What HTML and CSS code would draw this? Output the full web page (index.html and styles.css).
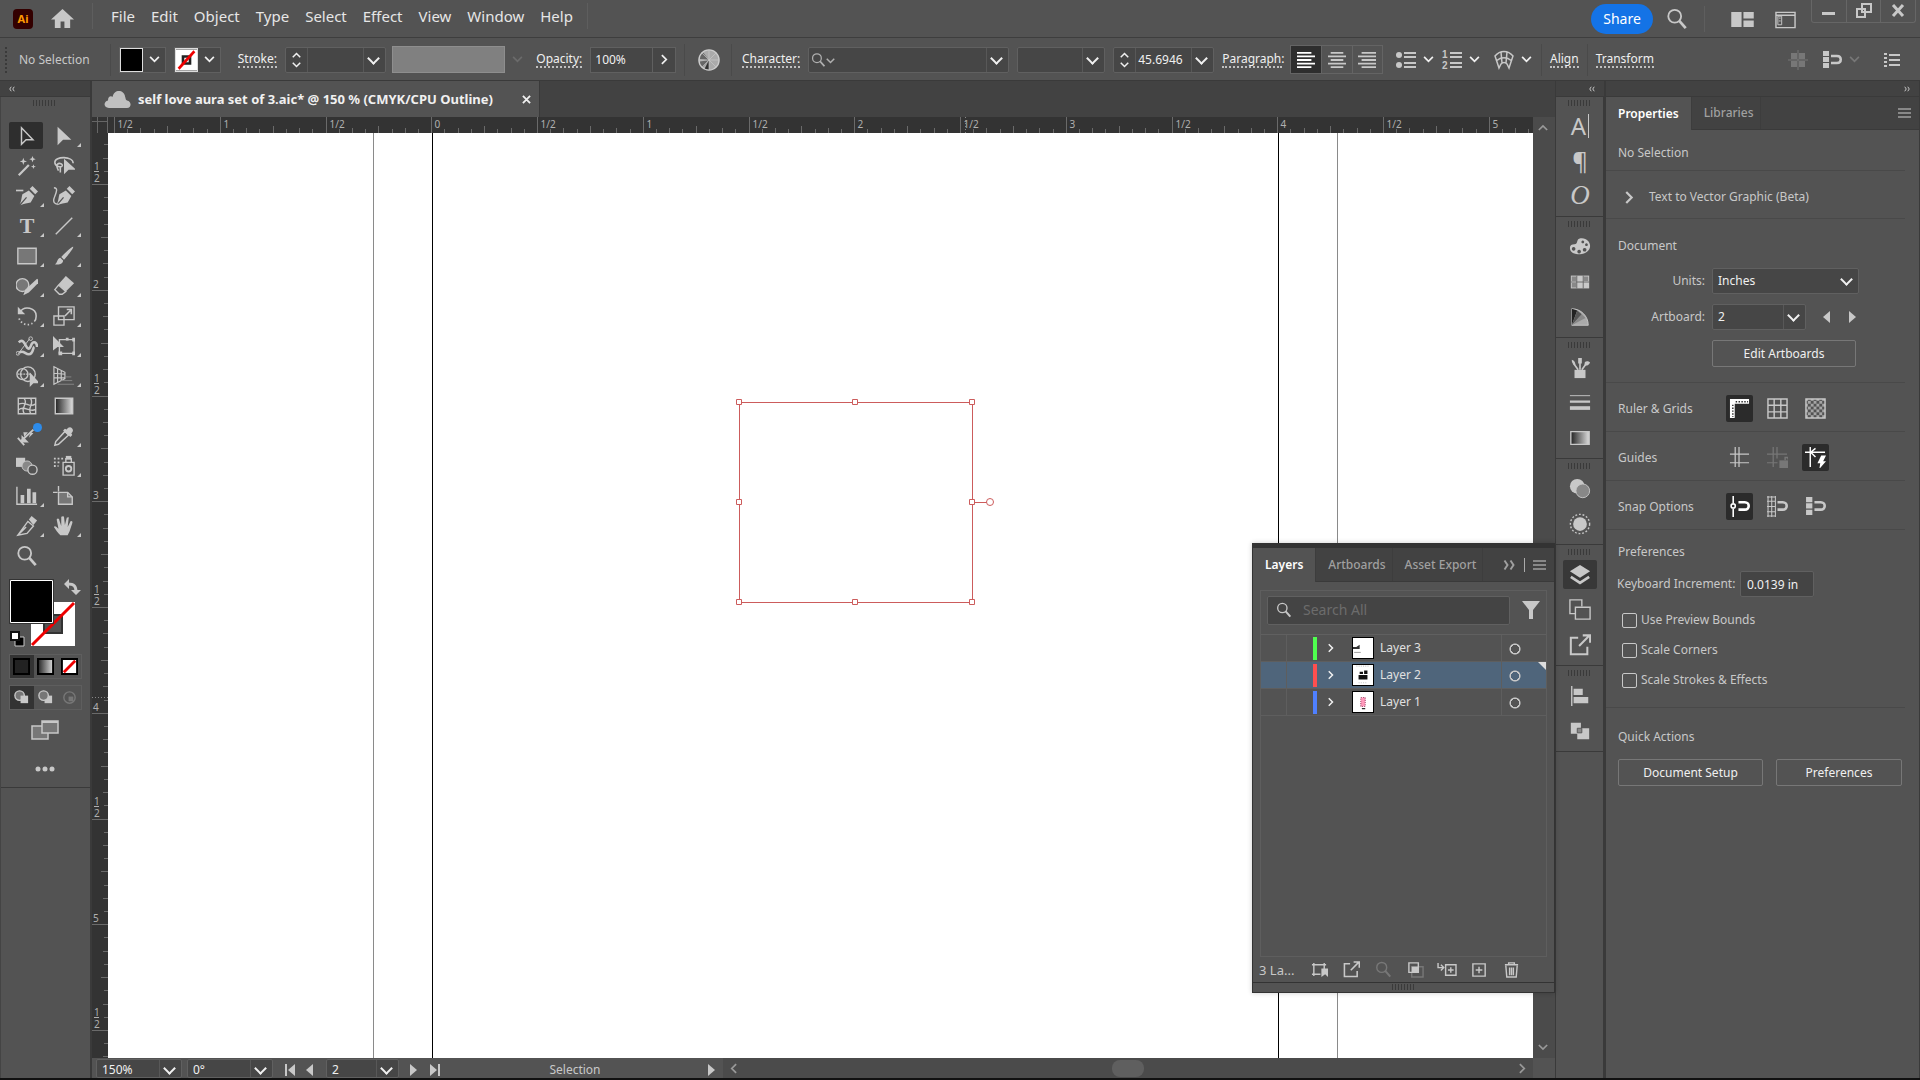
FILE: index.html
```html
<!DOCTYPE html>
<html lang="en">

<head>
    <meta charset="utf-8">
    <title>self love aura set of 3.aic</title>
    <link rel="stylesheet" href="styles.css">
</head>

<body>
    <!-- icon sprite -->
    <svg class="sprite" aria-hidden="true">
        <defs>
            <linearGradient id="grad"><stop offset="0" stop-color="#222" /><stop offset="1" stop-color="#ddd" /></linearGradient>
            <pattern id="checks" width="6" height="6" patternUnits="userSpaceOnUse"><path d="M0 0h3v3H0zM3 3h3v3H3z" fill="#c8c8c8" opacity=".7" /></pattern>
        </defs>
        <symbol id="select" viewBox="0 0 24 24"><path d="M6 3v18l5-5h7.500z" fill="none" stroke="currentColor" stroke-width="1.600" /></symbol>
        <symbol id="direct" viewBox="0 0 24 24"><path d="M5 2v20l6-6h9z" fill="currentColor" /></symbol>
        <symbol id="wand" viewBox="0 0 24 24"><path d="M3 22L14 11" stroke="currentColor" stroke-width="2.400" /><path d="M8 3l1 3 3 1-3 1-1 3-1-3-3-1 3-1zM18 1l1 2.500 2.500 1-2.500 1-1 2.500-1-2.500-2.500-1 2.500-1zM19 10l.7 2 2 .7-2 .7-.7 2-.7-2-2-.7 2-.7z" fill="currentColor" /></symbol>
        <symbol id="lasso" viewBox="0 0 24 24"><path d="M22 9c0-8-20-8-20-1 0 5 7 6 8 4s-3-4-5-2 0 5 1 7M8 12v7" fill="none" stroke="currentColor" stroke-width="1.700" /><path d="M12 4v17l5-5h8z" fill="currentColor" /></symbol>
        <symbol id="nib" viewBox="0 0 24 24"><path d="M4 21c2-3 2-8 3-11l7-4 6 6-4 7c-3 1-8 1-11 3l7-8-1-1zM15 4l3-3 6 6-3 3z" fill="currentColor" /></symbol>
        <symbol id="pen" viewBox="0 0 24 24"><use href="#nib" /><path d="M-1 6h9" stroke="currentColor" stroke-width="1.800" /></symbol>
        <symbol id="curve" viewBox="0 0 24 24"><use href="#nib" /><path d="M1 3c6 0 1 8 0 12s1 6 5 6" fill="none" stroke="currentColor" stroke-width="1.500" /></symbol>
        <symbol id="line" viewBox="0 0 24 24"><path d="M3 21L21 3" stroke="currentColor" stroke-width="1.600" /></symbol>
        <symbol id="rect" viewBox="0 0 24 24"><path d="M2 3.500h20v17H2z" fill="#777" stroke="currentColor" stroke-width="1.500" /></symbol>
        <symbol id="brush" viewBox="0 0 24 24"><path d="M22 2c1 1-6 10-10 14l-3-3C13 9 21 1 22 2zM8 14l3 3c0 4-5 5-9 4 3-1 2-6 6-7z" fill="currentColor" /></symbol>
        <symbol id="shaper" viewBox="0 0 24 24"><circle cx="7" cy="11" r="7" fill="#777" stroke="currentColor" stroke-width="1.500" /><path d="M8 22l2-6L23 4l3 3-12 12z" fill="currentColor" /></symbol>
        <symbol id="eraser" viewBox="0 0 24 24"><path d="M14 1l9 8-9 9-8-8z" fill="currentColor" /><path d="M6 11l-4 5 5 5h3l4-3z" fill="none" stroke="currentColor" stroke-width="1.500" /></symbol>
        <symbol id="rotate" viewBox="0 0 24 24"><path d="M4 8c5-8 18-5 18 4 0 3-1 5-2 6" fill="none" stroke="currentColor" stroke-width="1.700" /><path d="M2 2v8h8z" fill="currentColor" /><path d="M18 20a10 10 0 0 1-15-7" fill="none" stroke="currentColor" stroke-width="2" stroke-dasharray="1.500 2.500" /></symbol>
        <symbol id="scale" viewBox="0 0 24 24"><path d="M6 2h17v14H6zM1 12h11v10H1z" fill="none" stroke="currentColor" stroke-width="1.500" /><path d="M13 12l6-6M15 5h5v5" fill="none" stroke="currentColor" stroke-width="1.700" /></symbol>
        <symbol id="width" viewBox="0 0 24 24"><path d="M3 8c4-4 6 0 8 4 3 6 5 1 6-2 2-4 6-2 6 3M4 19c4-3 6 2 10 2 5 0 4-7 6-8" fill="none" stroke="currentColor" stroke-width="2.800" /><path d="M2 21L15 4" stroke="currentColor" /><circle cx="2" cy="20" r="2" fill="none" stroke="currentColor" /><circle cx="16" cy="4" r="2" fill="none" stroke="currentColor" /></symbol>
        <symbol id="free" viewBox="0 0 24 24"><path d="M7 5h16v15H7z" fill="none" stroke="currentColor" stroke-width="1.500" /><path d="M0 1v16l5-4h7zM21 3h4v4h-4zM21 18h4v4h-4zM6 18h4v4H6zM14 3h3v3h-3z" fill="currentColor" /></symbol>
        <symbol id="shape" viewBox="0 0 24 24"><circle cx="7" cy="10" r="6" fill="none" stroke="currentColor" stroke-width="1.500" /><circle cx="13" cy="10" r="8" fill="none" stroke="currentColor" stroke-width="1.500" /><path d="M2 10h14" stroke="currentColor" stroke-width="1.500" stroke-dasharray="2 1" /><path d="M15 8v16l4-4h7z" fill="currentColor" /></symbol>
        <symbol id="perspective" viewBox="0 0 24 24"><path d="M1 2v19l12-6V8zM5 4v15M9 6v11M1 9l12 1M1 14h12" fill="none" stroke="currentColor" stroke-width="1.300" /><path d="M14 13h6M9 17h12M5 21h18" stroke="#888" /></symbol>
        <symbol id="mesh" viewBox="0 0 24 24"><path d="M2.500 3.500h19v17h-19zM3 10c8-4 11 5 18 0M3 16c6-5 11 3 18 0M9 4c5 6-5 10 0 16M16 4c4 6-4 10 0 16" fill="none" stroke="currentColor" stroke-width="1.500" /></symbol>
        <symbol id="gradient" viewBox="0 0 24 24"><path d="M2.500 3.500h19v17h-19z" fill="url(#grad)" stroke="currentColor" stroke-width="1.500" /></symbol>
        <symbol id="dimension" viewBox="0 0 24 24"><path d="M2 14l7 8M5 18L19 5" fill="none" stroke="currentColor" stroke-width="2" /><path d="M6 11v8h8zM8 8h5l-4 5zM16 8l3 1-5 5z" fill="currentColor" /></symbol>
        <symbol id="dropper" viewBox="0 0 24 24"><path d="M13 7l4 4L6 21l-4 1 1-4z" fill="none" stroke="currentColor" stroke-width="1.600" /><path d="M11 6l2-2 2 1c3-6 10 0 5 4l1 2-2 2z" fill="currentColor" /></symbol>
        <symbol id="blend" viewBox="0 0 24 24"><path d="M0 3h10v10H0z" fill="currentColor" /><circle cx="12" cy="12" r="5.500" fill="#888" stroke="currentColor" /><circle cx="18" cy="16" r="5" fill="#535353" stroke="currentColor" stroke-width="1.500" /></symbol>
        <symbol id="spray" viewBox="0 0 24 24"><path d="M11 8h12v14H11zM14 4h6v4h-6z" fill="none" stroke="currentColor" stroke-width="1.500" /><path d="M14 1h6v4h-6z" fill="currentColor" /><circle cx="17" cy="15" r="3" fill="none" stroke="currentColor" stroke-width="2" /><path d="M1 4h10M1 8h7M1 12h5" stroke="currentColor" stroke-width="2" stroke-dasharray="2 2" /></symbol>
        <symbol id="graph" viewBox="0 0 24 24"><path d="M1 2v19h22" fill="none" stroke="currentColor" stroke-width="1.500" /><path d="M5 11h4v9H5zM12 4h4v16h-4zM18 8h4v12h-4z" fill="currentColor" /></symbol>
        <symbol id="artboard" viewBox="0 0 24 24"><path d="M6 8h10l5 5v8H6z" fill="#777" stroke="currentColor" stroke-width="1.500" /><path d="M6 1v6M-1 8h6M16 8v5h5" fill="none" stroke="currentColor" stroke-width="1.500" /></symbol>
        <symbol id="slice" viewBox="0 0 24 24"><path d="M2 22L13 7l6 5-7 8zM2 22l9-9" fill="none" stroke="currentColor" stroke-width="1.500" /><path d="M14 5l3-4 6 5-4 5z" fill="currentColor" /></symbol>
        <symbol id="hand" viewBox="0 0 24 24"><path d="M8 22c-3-3-5-6-7-9 1-2 3 0 5 2L4 5c1-2 3-1 3 1l2 6V2c1-1 3-1 3 0l1 9 2-8c1-1 3-1 2 1l-1 9 3-6c1-1 3 0 2 2l-3 9-2 4z" fill="currentColor" /></symbol>
        <symbol id="search" viewBox="0 0 24 24"><circle cx="9.500" cy="9" r="7" fill="none" stroke="currentColor" stroke-width="2" /><path d="M14.500 14l7 8" stroke="currentColor" stroke-width="3" /></symbol>
        <symbol id="home" viewBox="0 0 24 24"><path d="M12 2L0 13h4v9h6v-7h4v7h6v-9h4z" fill="currentColor" /></symbol>
        <symbol id="cloud" viewBox="0 0 28 20"><path d="M5 19c-6 0-6-7-1-8 0-5 3-5 5-4 1-8 12-8 13 0 1 2 0 3 2 4 5 1 5 8 0 8z" fill="currentColor" /></symbol>
        <symbol id="wheel" viewBox="0 0 24 24"><circle cx="12" cy="12" r="11" fill="#aaa" /><path d="M12 12L5 3a11 11 0 0 0-4 8zM12 12L1 14a11 11 0 0 0 4 6z" fill="#666" /><path d="M12 12l-5 10a11 11 0 0 0 5 1z" fill="#333" /><path d="M12 1v22M1 12h22M4 4l16 16M20 4L4 20" stroke="#ccc" stroke-width=".7" /><circle cx="12" cy="12" r="11" fill="none" stroke="#ccc" stroke-width="1.500" /></symbol>
        <symbol id="lines-left" viewBox="0 0 20 20"><path d="M0 2h16M0 6h20M0 10h16M0 14h20M0 18h16" stroke="currentColor" stroke-width="2" /></symbol>
        <symbol id="lines-mid" viewBox="0 0 20 20"><path d="M3 2h14M0 6h20M3 10h14M0 14h20M3 18h14" stroke="currentColor" stroke-width="2" /></symbol>
        <symbol id="lines-right" viewBox="0 0 20 20"><path d="M4 2h16M0 6h20M4 10h16M0 14h20M4 18h16" stroke="currentColor" stroke-width="2" /></symbol>
        <symbol id="bullets" viewBox="0 0 20 20"><circle cx="3" cy="5" r="3" fill="currentColor" /><circle cx="3" cy="15" r="3" fill="currentColor" /><path d="M8 3h12M8 7h12M8 13h12M8 17h12" stroke="currentColor" stroke-width="2" /></symbol>
        <symbol id="envelope" viewBox="0 0 20 20"><path d="M1 6c5-6 13-6 18 0l-4 12-2-4c-2-2-4-2-6 0l-2 4zM7 2l1 11M13 2l-1 11M2 11c5-4 11-4 16 0" fill="none" stroke="currentColor" stroke-width="1.500" /></symbol>
        <symbol id="pixel" viewBox="0 0 20 20"><path d="M3 3h6v6H3zM11 3h6v6h-6zM3 11h6v6H3zM11 11h6v6h-6z" fill="currentColor" /><path d="M10 0v20M0 10h20" stroke="currentColor" /></symbol>
        <symbol id="snap-box" viewBox="0 0 20 20"><path d="M1 1h6v5H1zM1 7h6v5H1zM1 13h6v5H1z" fill="currentColor" /><path d="M9 6h6c5 0 5 7 0 7H9" fill="none" stroke="currentColor" stroke-width="2.500" /></symbol>
        <symbol id="snap-grid" viewBox="0 0 20 20"><path d="M1 0v20M4.500 0v20M8 0v20M0 1h8M0 5h8M0 10h8M0 15h8M0 19h8" stroke="currentColor" /><path d="M10 6h5c5 0 5 7 0 7h-5" fill="none" stroke="currentColor" stroke-width="2.500" /></symbol>
        <symbol id="snap-point" viewBox="0 0 20 20"><path d="M4 0v7M4 12v8" stroke="currentColor" stroke-width="1.500" /><circle cx="4" cy="9.500" r="2" fill="none" stroke="currentColor" stroke-width="1.500" /><path d="M9 6h6c5 0 5 7 0 7H9" fill="none" stroke="currentColor" stroke-width="2.500" /></symbol>
        <symbol id="list" viewBox="0 0 20 20"><path d="M2 4h3M2 8h3M2 12h3M2 16h3M7 5h11M7 10h11M7 15h11" stroke="currentColor" stroke-width="2" /></symbol>
        <symbol id="arrange" viewBox="0 0 24 16"><path d="M0 0h11v16H0zM13 0h11v7H13zM13 9h11v7H13z" fill="currentColor" /></symbol>
        <symbol id="workspace" viewBox="0 0 22 18"><path d="M1 1h20v16H1zM1 4h20" fill="none" stroke="currentColor" stroke-width="1.500" /><path d="M3 5h4v9H3zM4 7h2M4 10h2" fill="none" stroke="currentColor" /></symbol>
        <symbol id="menu" viewBox="0 0 14 14"><path d="M0 3h13M0 7h13M0 11h13" stroke="currentColor" stroke-width="1.300" /></symbol>
        <symbol id="palette" viewBox="0 0 24 24"><path fill-rule="evenodd" d="M1 13c0-3 2-4 5-4 4 0 2-5 5-6 7-2 12 3 12 8s-5 9-11 9S1 18 1 13zm4-1a2 2 0 1 0 .1 0zm6 3a2 2 0 1 0 .1 0zm6-2a2 2 0 1 0 .1 0zm2-5a1.500 1.500 0 1 0 .1 0zm-4-3a1.500 1.500 0 1 0 .1 0z" fill="currentColor" /></symbol>
        <symbol id="swatches" viewBox="0 0 24 24"><path d="M2 5h20v14H2z" fill="currentColor" /><path d="M3 6h5v5H3zM16 6h5v5h-5zM3 13h5v5H3z" fill="#888" /><path d="M8.500 5v14M15.500 5v14M2 12h20" stroke="#666" /></symbol>
        <symbol id="guide" viewBox="0 0 24 24"><path d="M3 3c10 0 18 8 18 18H3z" fill="#aaa" stroke="currentColor" /><path d="M3 21V3l6 2z" fill="#222" /><path d="M3 21L9 5l5 4z" fill="#555" /><path d="M3 21L14 9l4 4z" fill="#888" /></symbol>
        <symbol id="brushes" viewBox="0 0 24 24"><path d="M6 14h12v9H6z" fill="currentColor" /><path d="M10 14L5 7M12 14V5M14 14l5-7" stroke="currentColor" stroke-width="1.800" /><path d="M3 3c3 1 4 3 4 6-3-1-4-3-4-6zM10 1h4v6h-4zM17 7c0-3 4-3 6-1-1 3-4 4-6 3z" fill="currentColor" /></symbol>
        <symbol id="strokes" viewBox="0 0 24 24"><path d="M1 4h22" stroke="currentColor" /><path d="M1 10.500h22" stroke="currentColor" stroke-width="2.500" /><path d="M1 17.500h22" stroke="currentColor" stroke-width="4" /></symbol>
        <symbol id="gradient-panel" viewBox="0 0 24 24"><path d="M2 5h20v14H2z" fill="url(#grad)" stroke="currentColor" stroke-width="1.500" /></symbol>
        <symbol id="transparency" viewBox="0 0 24 24"><circle cx="9" cy="9" r="8" fill="currentColor" /><circle cx="15" cy="14" r="7.500" fill="#888" stroke="currentColor" /></symbol>
        <symbol id="appearance" viewBox="0 0 24 24"><circle cx="12" cy="12" r="7.500" fill="currentColor" /><circle cx="12" cy="12" r="10.500" fill="none" stroke="currentColor" stroke-width="1.500" stroke-dasharray="2 2" /></symbol>
        <symbol id="layers" viewBox="0 0 24 24"><path d="M12 1l11 7-11 7L1 8z" fill="currentColor" /><path d="M2 14l10 6.500L22 14" fill="none" stroke="currentColor" stroke-width="3" /></symbol>
        <symbol id="artboards" viewBox="0 0 24 24"><path d="M7 16H1V1h13v7M7 9h16v13H7z" fill="none" stroke="currentColor" stroke-width="1.500" /></symbol>
        <symbol id="export" viewBox="0 0 24 24"><path d="M10 4H2v18h18v-8M11 13L22 2M15 1.500h8v8" fill="none" stroke="currentColor" stroke-width="2.200" /></symbol>
        <symbol id="align" viewBox="0 0 24 24"><path d="M3 1v22" stroke="currentColor" stroke-width="1.500" /><path d="M5 4h10v7H5zM5 13h16v7H5z" fill="currentColor" /></symbol>
        <symbol id="pathfinder" viewBox="0 0 24 24"><path d="M2 3h11v12H2zM9 9h13v12H9z" fill="currentColor" /><path d="M9 9h5v5H9z" fill="#888" stroke="#535353" /></symbol>
        <symbol id="rulers" viewBox="0 0 22 22"><path d="M1 1h20v5H6v15H1z" fill="currentColor" /><path d="M7 4h13M4 7v13" stroke="#2b2b2b" stroke-width="1.500" stroke-dasharray="1.500 1.500" /></symbol>
        <symbol id="grid" viewBox="0 0 22 22"><path d="M1 1h20v20H1zM7.500 1v20M14.500 1v20M1 7.500h20M1 14.500h20" fill="none" stroke="currentColor" stroke-width="1.500" /></symbol>
        <symbol id="checker" viewBox="0 0 22 22"><path d="M1 1h20v20H1z" fill="url(#checks)" stroke="currentColor" stroke-width="1.500" /></symbol>
        <symbol id="guides" viewBox="0 0 22 22"><path d="M6.500 0v21M10.500 0v21M1 7.500h20M1 16.500h20" stroke="currentColor" stroke-width="1.300" /></symbol>
        <symbol id="guides-lock" viewBox="0 0 22 22"><path d="M6.500 0v21M10.500 0v12M0 7.500h21M0 16.500h11" stroke="currentColor" stroke-width="1.300" /><path d="M13 14h10v8H13z" fill="currentColor" /><path d="M19 14v-3h3v2" fill="none" stroke="currentColor" stroke-width="1.500" /></symbol>
        <symbol id="smart" viewBox="0 0 22 22"><path d="M5.500 0v21M0 5.500h21M6 5.500l5-4M6 5.500l5 5" fill="none" stroke="currentColor" stroke-width="1.500" /><path d="M17 9l-4 8h3l-1 6 7-8h-3l3-6z" fill="currentColor" /></symbol>
        <symbol id="filter" viewBox="0 0 18 20"><path d="M0 1h18l-7 9v9H7v-9z" fill="currentColor" /></symbol>
        <symbol id="locate" viewBox="0 0 18 18"><path d="M3 4h11v6M10 14H3V4M1 4h3M3 2v3M12 4h4M14 2v3M1 14h3M3 12v4" fill="none" stroke="currentColor" stroke-width="1.500" /><path d="M11 8h7v9l-3-3-4 3z" fill="currentColor" /></symbol>
        <symbol id="mask" viewBox="0 0 18 18"><path d="M5 6h12v11H5z" fill="none" stroke="#777" stroke-width="1.500" /><path d="M2 2h10v10H2z" fill="none" stroke="currentColor" stroke-width="1.500" /><path d="M5 6h7v6H5z" fill="currentColor" /></symbol>
        <symbol id="sublayer" viewBox="0 0 22 18"><path d="M1 2v5h5M4 4l3 3-3 3" fill="none" stroke="currentColor" stroke-width="1.500" /><path d="M9 4h11v11H9zM14.500 6.500v6M11.500 9.500h6" fill="none" stroke="currentColor" stroke-width="1.500" /></symbol>
        <symbol id="add" viewBox="0 0 18 18"><path d="M2 3h13v13H2zM8.500 6v7M5 9.500h7" fill="none" stroke="currentColor" stroke-width="1.500" /></symbol>
        <symbol id="trash" viewBox="0 0 18 18"><path d="M3 5l1 12h10l1-12M2 4h14M6 4V2h6v2M7 7v8M9 7v8M11 7v8" fill="none" stroke="currentColor" stroke-width="1.500" /></symbol>
        <symbol id="tri-left" viewBox="0 0 8 12"><path d="M7 0v12L0 6z" fill="currentColor" /></symbol>
        <symbol id="tri-right" viewBox="0 0 8 12"><path d="M1 0v12l7-6z" fill="currentColor" /></symbol>
        <symbol id="tri-first" viewBox="0 0 12 12"><path d="M1 0h2v12H1zM11 0v12L4 6z" fill="currentColor" /></symbol>
        <symbol id="tri-last" viewBox="0 0 12 12"><path d="M9 0h2v12H9zM1 0v12l7-6z" fill="currentColor" /></symbol>
        <symbol id="double-left" viewBox="0 0 8 8"><path d="M3 1L1 4l2 3M7 1L5 4l2 3" fill="none" stroke="currentColor" stroke-width="1.300" /></symbol>
        <symbol id="double-right" viewBox="0 0 8 8"><path d="M1 1l2 3-2 3M5 1l2 3-2 3" fill="none" stroke="currentColor" stroke-width="1.300" /></symbol>
        <symbol id="chev-right" viewBox="0 0 8 12"><path d="M1 1l5 5-5 5" fill="none" stroke="currentColor" stroke-width="2" /></symbol>
        <symbol id="chev-left" viewBox="0 0 8 12"><path d="M7 1L2 6l5 5" fill="none" stroke="currentColor" stroke-width="2" /></symbol>
        <symbol id="chev-down" viewBox="0 0 12 8"><path d="M1 1l5 5 5-5" fill="none" stroke="currentColor" stroke-width="2" /></symbol>
        <symbol id="chev-up" viewBox="0 0 12 8"><path d="M1 7l5-5 5 5" fill="none" stroke="currentColor" stroke-width="2" /></symbol>
    </svg>

    <header class="menubar">
        <svg class="logo" viewBox="0 0 20 20"><rect width="20" height="20" rx="4" fill="#330000" /><text x="10" y="14" text-anchor="middle">Ai</text></svg>
        <button class="home" aria-label="Home"><svg><use href="#home" /></svg></button>
        <nav class="menus">
            <button>File</button>
            <button>Edit</button>
            <button>Object</button>
            <button>Type</button>
            <button>Select</button>
            <button>Effect</button>
            <button>View</button>
            <button>Window</button>
            <button>Help</button>
        </nav>
        <button class="share">Share</button>
        <button class="bar-search" aria-label="Search"><svg><use href="#search" /></svg></button>
        <div class="workspaces">
            <button aria-label="Arrange documents"><svg width="23" height="15"><use href="#arrange" /></svg></button>
            <button aria-label="Workspace"><svg width="21" height="18"><use href="#workspace" /></svg></button>
        </div>
        <div class="window-buttons">
            <button aria-label="Minimize"><svg viewBox="0 0 16 16"><path d="M1 9h13v3H1z" fill="currentColor" /></svg></button>
            <button aria-label="Restore"><svg viewBox="0 0 16 16"><path d="M6 1h9v8H6zM1 6h8v8H1z" fill="none" stroke="currentColor" stroke-width="2" /></svg></button>
            <button aria-label="Close"><svg viewBox="0 0 16 16"><path d="M3 2l10 11M13 2L3 13" stroke="currentColor" stroke-width="3" /></svg></button>
        </div>
    </header>

    <section class="controlbar">
        <div class="control-status">No Selection</div>
        <div class="control-group appearance">
            <button class="swatch" aria-label="Fill"><span class="chip black"></span><svg class="chev"><use href="#chev-down" /></svg></button>
            <button class="swatch" aria-label="Stroke colour"><svg class="chip" viewBox="0 0 24 24"><path d="M0 0h24v24H0z" fill="#fff" /><path d="M8 8h8v8H8z" fill="none" stroke="#222" stroke-width="3" /><path d="M3 22L21 2" stroke="#e00" stroke-width="3" /></svg><svg class="chev"><use href="#chev-down" /></svg></button>
            <label class="link first" for="stroke">Stroke:</label>
            <div class="combo spin w101"><span class="arrows"><svg><use href="#chev-up" /></svg><svg><use href="#chev-down" /></svg></span><select id="stroke"><option></option></select></div>
            <button class="profile" aria-label="Width profile"><span></span><svg class="chev"><use href="#chev-down" /></svg></button>
            <label class="link" for="opacity">Opacity:</label>
            <div class="stepper"><input id="opacity" value="100%"><button aria-label="Opacity options"><svg><use href="#chev-right" /></svg></button></div>
        </div>
        <div class="control-group recolor"><button aria-label="Recolor"><svg width="22" height="22"><use href="#wheel" /></svg></button></div>
        <div class="control-group characters">
            <label class="link" for="font">Character:</label>
            <div class="combo w201"><svg class="lens"><use href="#search" /></svg><svg class="lens-chev"><use href="#chev-down" /></svg><select id="font"><option></option></select></div>
            <div class="combo w88"><select aria-label="Font style"><option></option></select></div>
            <div class="combo spin w101"><span class="arrows"><svg><use href="#chev-up" /></svg><svg><use href="#chev-down" /></svg></span><select aria-label="Font size"><option>45.6946</option></select></div>
            <a class="link para" href="#">Paragraph:</a>
            <div class="align-set">
                <button class="on" aria-label="Align left"><svg><use href="#lines-left" /></svg></button>
                <button aria-label="Align centre"><svg><use href="#lines-mid" /></svg></button>
                <button aria-label="Align right"><svg><use href="#lines-right" /></svg></button>
            </div>
            <button class="split" aria-label="Bullets"><svg class="pic"><use href="#bullets" /></svg><svg class="chev"><use href="#chev-down" /></svg></button>
            <button class="split" aria-label="Numbering"><svg class="pic" viewBox="0 0 20 20"><text x="0" y="8" class="tiny">1</text><text x="0" y="19" class="tiny">2</text><path d="M8 3h12M8 7h12M8 13h12M8 17h12" stroke="currentColor" stroke-width="2" /></svg><svg class="chev"><use href="#chev-down" /></svg></button>
            <button class="split" aria-label="Envelope"><svg class="pic"><use href="#envelope" /></svg><svg class="chev"><use href="#chev-down" /></svg></button>
        </div>
        <div class="control-group"><a class="link" href="#">Align</a></div>
        <div class="control-group"><a class="link" href="#">Transform</a></div>
        <div class="control-right">
            <button class="dim" aria-label="Align to pixel grid"><svg class="pic"><use href="#pixel" /></svg></button>
            <button class="split" aria-label="Snap"><svg class="pic"><use href="#snap-box" /></svg><svg class="chev dim"><use href="#chev-down" /></svg></button>
            <button aria-label="Control bar menu"><svg class="pic"><use href="#list" /></svg></button>
        </div>
    </section>

    <main>
        <aside class="toolbox">
            <div class="collapse"><svg><use href="#double-left" /></svg></div>
            <div class="toolbox-body">
                <div class="grip"></div>
                <div class="tools">
                    <button class="on" aria-label="Selection"><svg><use href="#select" /></svg></button>
                    <button class="fly" aria-label="Direct Selection"><svg><use href="#direct" /></svg></button>
                    <button aria-label="Magic Wand"><svg><use href="#wand" /></svg></button>
                    <button aria-label="Lasso"><svg><use href="#lasso" /></svg></button>
                    <button class="fly" aria-label="Delete Anchor Point"><svg><use href="#pen" /></svg></button>
                    <button aria-label="Curvature"><svg><use href="#curve" /></svg></button>
                    <button class="fly" aria-label="Type"><svg viewBox="0 0 24 24"><text x="12" y="20" text-anchor="middle" class="serif-t">T</text></svg></button>
                    <button class="fly" aria-label="Line Segment"><svg><use href="#line" /></svg></button>
                    <button class="fly" aria-label="Rectangle"><svg><use href="#rect" /></svg></button>
                    <button class="fly" aria-label="Paintbrush"><svg><use href="#brush" /></svg></button>
                    <button class="fly" aria-label="Shaper"><svg><use href="#shaper" /></svg></button>
                    <button class="fly" aria-label="Eraser"><svg><use href="#eraser" /></svg></button>
                    <button class="fly" aria-label="Rotate"><svg><use href="#rotate" /></svg></button>
                    <button class="fly" aria-label="Scale"><svg><use href="#scale" /></svg></button>
                    <button class="fly" aria-label="Width"><svg><use href="#width" /></svg></button>
                    <button class="fly" aria-label="Free Transform"><svg><use href="#free" /></svg></button>
                    <button class="fly" aria-label="Shape Builder"><svg><use href="#shape" /></svg></button>
                    <button class="fly" aria-label="Perspective Grid"><svg><use href="#perspective" /></svg></button>
                    <button aria-label="Mesh"><svg><use href="#mesh" /></svg></button>
                    <button aria-label="Gradient"><svg><use href="#gradient" /></svg></button>
                    <button class="fresh" aria-label="Dimension"><svg><use href="#dimension" /></svg></button>
                    <button class="fly" aria-label="Eyedropper"><svg><use href="#dropper" /></svg></button>
                    <button aria-label="Blend"><svg><use href="#blend" /></svg></button>
                    <button class="fly" aria-label="Symbol Sprayer"><svg><use href="#spray" /></svg></button>
                    <button class="fly" aria-label="Column Graph"><svg><use href="#graph" /></svg></button>
                    <button aria-label="Artboard"><svg><use href="#artboard" /></svg></button>
                    <button class="fly" aria-label="Slice"><svg><use href="#slice" /></svg></button>
                    <button class="fly" aria-label="Hand"><svg><use href="#hand" /></svg></button>
                    <button aria-label="Zoom"><svg><use href="#search" /></svg></button>
                </div>
                <svg class="fill-stroke" viewBox="0 0 74 70">
                    <path d="M22 24h44v44H22z" fill="#fff" />
                    <path d="M35 37h18v18H35z" fill="#535353" stroke="#333" stroke-width="2" />
                    <path d="M23 67L65 25" stroke="#e00" stroke-width="3" />
                    <path d="M.500 1.500h44v44h-44z" fill="#000" stroke="#333" />
                    <path d="M1.500 2.500h42v42h-42z" fill="#000" stroke="#fff" />
                    <path d="M59 6c6 0 8 2 8 8" fill="none" stroke="#c8c8c8" stroke-width="3" />
                    <path d="M55 6l5-5v10zM62 12h10l-5 5z" fill="#c8c8c8" />
                    <path d="M6 59h9v9H6z" fill="#000" stroke="#c8c8c8" />
                    <path d="M2 54h8v8H2z" fill="#fff" stroke="#111" stroke-width="2" />
                </svg>
                <div class="modes">
                    <button class="on" aria-label="Color"><svg viewBox="0 0 18 18"><path d="M1 1h16v16H1z" fill="#222" stroke="#000" stroke-width="2" /></svg></button>
                    <button aria-label="Gradient fill"><svg viewBox="0 0 18 18"><path d="M1 1h16v16H1z" fill="url(#grad)" stroke="#000" stroke-width="2" /></svg></button>
                    <button aria-label="None"><svg viewBox="0 0 18 18"><path d="M1 1h16v16H1z" fill="#fff" stroke="#000" stroke-width="2" /><path d="M3 15L15 3" stroke="#e00" stroke-width="3" /></svg></button>
                </div>
                <div class="modes">
                    <button class="on" aria-label="Draw Normal"><svg viewBox="0 0 18 18"><circle cx="7" cy="7" r="5" fill="#777" stroke="currentColor" stroke-width="1.500" /><path d="M8 7h8v8H8z" fill="currentColor" /></svg></button>
                    <button aria-label="Draw Behind"><svg viewBox="0 0 18 18"><path d="M8 7h8v8H8z" fill="currentColor" /><circle cx="7" cy="7" r="5" fill="#777" stroke="currentColor" stroke-width="1.500" /></svg></button>
                    <button class="dim" aria-label="Draw Inside"><svg viewBox="0 0 18 18"><circle cx="9" cy="9" r="6" fill="none" stroke="currentColor" stroke-width="1.500" /><path d="M8 8h5v5H8z" fill="currentColor" /></svg></button>
                </div>
                <button class="screen-mode" aria-label="Screen mode"><svg viewBox="0 0 28 22"><path d="M1 7h16v13H1z" fill="#777" stroke="currentColor" stroke-width="1.500" /><path d="M11 2h16v12H11z" fill="#777" stroke="currentColor" stroke-width="1.500" /><path d="M11 3h16" stroke="currentColor" stroke-width="2" /></svg></button>
                <button class="more" aria-label="Edit toolbar"><svg viewBox="0 0 20 6"><circle cx="3" cy="3" r="2.500" fill="currentColor" /><circle cx="10" cy="3" r="2.500" fill="currentColor" /><circle cx="17" cy="3" r="2.500" fill="currentColor" /></svg></button>
            </div>
        </aside>

        <section class="document">
            <div class="tabs">
                <div class="doc-tab">
                    <svg class="cloud"><use href="#cloud" /></svg>
                    <span>self love aura set of 3.aic* @ 150 % (CMYK/CPU Outline)</span>
                    <button aria-label="Close tab"><svg viewBox="0 0 10 10"><path d="M1 1l8 8M9 1L1 9" stroke="currentColor" stroke-width="2" /></svg></button>
                </div>
            </div>
            <div class="workarea">
                <svg class="corner" viewBox="0 0 16 16"><path d="M5.500 0v16M0 4.500h16M15.500 0v16" stroke="#666" /></svg>
                <svg class="ruler-h" id="ruler-h"></svg>
                <svg class="ruler-v" id="ruler-v"></svg>
                <div class="canvas">
                    <svg class="artwork">
                        <path d="M265.500 0v2000M1229.500 0v2000" stroke="#8a8a8a" />
                        <path d="M324.500 0v2000M1170.500 0v2000" stroke="#000" />
                        <g class="selection">
                            <path d="M631.500 269.500h233v200h-233zM864 369.500h15" />
                            <path d="M628.500 266.500h5v5h-5zM744.500 266.500h5v5h-5zM861.500 266.500h5v5h-5zM628.500 366.500h5v5h-5zM861.500 366.500h5v5h-5zM628.500 466.500h5v5h-5zM744.500 466.500h5v5h-5zM861.500 466.500h5v5h-5z" />
                            <circle cx="882" cy="369" r="3.500" />
                        </g>
                    </svg>
                </div>
                <div class="scroll-v"><svg><use href="#chev-up" /></svg><svg><use href="#chev-down" /></svg></div>
            </div>
            <div class="statusbar">
                <div class="combo zoom"><select aria-label="Zoom level"><option>150%</option></select></div>
                <div class="combo zoom"><select aria-label="Rotation"><option>0°</option></select></div>
                <div class="pager">
                    <button aria-label="First artboard"><svg width="12" height="12"><use href="#tri-first" /></svg></button>
                    <button aria-label="Previous artboard"><svg width="8" height="12"><use href="#tri-left" /></svg></button>
                </div>
                <div class="combo page"><select aria-label="Current artboard"><option>2</option></select></div>
                <div class="pager">
                    <button aria-label="Next artboard"><svg width="8" height="12"><use href="#tri-right" /></svg></button>
                    <button aria-label="Last artboard"><svg width="12" height="12"><use href="#tri-last" /></svg></button>
                </div>
                <div class="status-text">Selection</div>
                <button class="status-more" aria-label="Status options"><svg width="8" height="12"><use href="#tri-right" /></svg></button>
                <div class="scroll-h"><svg><use href="#chev-left" /></svg><span class="thumb"></span><svg><use href="#chev-right" /></svg></div>
                <div class="scroll-corner"></div>
            </div>

            <aside class="layers-panel">
                <div class="panel-tabs">
                    <button class="on">Layers</button>
                    <button>Artboards</button>
                    <button>Asset Export</button>
                    <span class="panel-tools"><svg width="14" height="12" viewBox="0 0 8 8"><use href="#double-right" /></svg><i></i><svg width="14" height="14"><use href="#menu" /></svg></span>
                </div>
                <div class="layers-box">
                    <div class="layers-search">
                        <div class="search-field"><svg><use href="#search" /></svg><input aria-label="Search layers" placeholder="Search All"></div>
                        <button aria-label="Filter"><svg width="18" height="20"><use href="#filter" /></svg></button>
                    </div>
                    <ul class="layer-list">
                        <li><span class="eye"></span><span class="lock"></span><span class="mark green"></span><svg class="open"><use href="#chev-right" /></svg><svg class="thumbnail" viewBox="0 0 18 18"><path d="M0 8h3l3-2v4H0z" fill="#333" /><path d="M1 13h6" stroke="#aaa" /></svg><span class="name">Layer 3</span><span class="target"></span></li>
                        <li class="current"><span class="eye"></span><span class="lock"></span><span class="mark red"></span><svg class="open"><use href="#chev-right" /></svg><svg class="thumbnail" viewBox="0 0 18 18"><path d="M6 6h3v2H6zM10 5h3v3h-3zM5 9h8v4H5z" fill="#111" /><path d="M3 1h12M5 16h8" stroke="#ccc" stroke-dasharray="1 1" /></svg><span class="name">Layer 2</span><span class="target"></span></li>
                        <li><span class="eye"></span><span class="lock"></span><span class="mark blue"></span><svg class="open"><use href="#chev-right" /></svg><svg class="thumbnail" viewBox="0 0 18 18"><path d="M7 5h4v8H7z" fill="#f9b" stroke="#a57" stroke-dasharray="1 1" /><path d="M8 15h3" stroke="#111" /></svg><span class="name">Layer 1</span><span class="target"></span></li>
                    </ul>
                </div>
                <div class="layers-footer">
                    <span>3 La...</span>
                    <button aria-label="Locate object"><svg><use href="#locate" /></svg></button>
                    <button aria-label="Collect for export"><svg><use href="#export" /></svg></button>
                    <button class="dim" aria-label="Find"><svg><use href="#search" /></svg></button>
                    <button aria-label="Clipping mask"><svg><use href="#mask" /></svg></button>
                    <button aria-label="New sublayer"><svg class="wide"><use href="#sublayer" /></svg></button>
                    <button aria-label="New layer"><svg><use href="#add" /></svg></button>
                    <button aria-label="Delete"><svg><use href="#trash" /></svg></button>
                </div>
                <div class="resize"><div class="grip"></div></div>
            </aside>
        </section>

        <aside class="dock">
            <div class="collapse end"><svg><use href="#double-left" /></svg></div>
            <div class="dock-group text-group">
                <div class="grip"></div>
                <button class="glyph" aria-label="Character"><span class="caret">A</span></button>
                <button class="glyph" aria-label="Paragraph">¶</button>
                <button class="glyph italic" aria-label="OpenType">O</button>
            </div>
            <div class="dock-group">
                <div class="grip"></div>
                <button aria-label="Color"><svg><use href="#palette" /></svg></button>
                <button aria-label="Swatches"><svg><use href="#swatches" /></svg></button>
                <button aria-label="Color Guide"><svg><use href="#guide" /></svg></button>
            </div>
            <div class="dock-group">
                <div class="grip"></div>
                <button aria-label="Brushes"><svg><use href="#brushes" /></svg></button>
                <button aria-label="Stroke"><svg><use href="#strokes" /></svg></button>
                <button aria-label="Gradient"><svg><use href="#gradient-panel" /></svg></button>
            </div>
            <div class="dock-group">
                <div class="grip"></div>
                <button aria-label="Transparency"><svg><use href="#transparency" /></svg></button>
                <button aria-label="Appearance"><svg><use href="#appearance" /></svg></button>
            </div>
            <div class="dock-group">
                <div class="grip"></div>
                <button class="on" aria-label="Layers"><svg><use href="#layers" /></svg></button>
                <button aria-label="Artboards"><svg><use href="#artboards" /></svg></button>
                <button aria-label="Asset Export"><svg><use href="#export" /></svg></button>
            </div>
            <div class="dock-group">
                <div class="grip"></div>
                <button aria-label="Align"><svg><use href="#align" /></svg></button>
                <button aria-label="Pathfinder"><svg><use href="#pathfinder" /></svg></button>
            </div>
        </aside>

        <aside class="properties">
            <div class="collapse end"><svg><use href="#double-right" /></svg></div>
            <div class="panel-tabs">
                <button class="on">Properties</button>
                <button>Libraries</button>
                <span class="panel-tools"><svg width="14" height="14"><use href="#menu" /></svg></span>
            </div>
            <div class="prop-body">
                <div class="prop-section one-line">No Selection</div>
                <div class="prop-section one-line"><button class="expander"><svg><use href="#chev-right" /></svg>Text to Vector Graphic (Beta)</button></div>
                <div class="prop-section document-section">
                    <h2>Document</h2>
                    <div class="field-row"><label for="units">Units:</label>
                        <div class="combo plain units"><select id="units"><option>Inches</option></select></div>
                    </div>
                    <div class="field-row"><label for="artboard-no">Artboard:</label>
                        <div class="combo board"><select id="artboard-no"><option>2</option></select></div>
                        <button class="step" aria-label="Previous"><svg width="8" height="12"><use href="#tri-left" /></svg></button>
                        <button class="step" aria-label="Next"><svg width="8" height="12"><use href="#tri-right" /></svg></button>
                    </div>
                    <button class="outline edit">Edit Artboards</button>
                </div>
                <div class="prop-section toggles"><span>Ruler &amp; Grids</span>
                    <button class="on" aria-label="Show rulers"><svg><use href="#rulers" /></svg></button>
                    <button aria-label="Show grid"><svg><use href="#grid" /></svg></button>
                    <button aria-label="Transparency grid"><svg><use href="#checker" /></svg></button>
                </div>
                <div class="prop-section toggles"><span>Guides</span>
                    <button aria-label="Show guides"><svg><use href="#guides" /></svg></button>
                    <button class="dim" aria-label="Lock guides"><svg><use href="#guides-lock" /></svg></button>
                    <button class="on" aria-label="Smart guides"><svg><use href="#smart" /></svg></button>
                </div>
                <div class="prop-section toggles"><span>Snap Options</span>
                    <button class="on" aria-label="Snap to point"><svg><use href="#snap-point" /></svg></button>
                    <button aria-label="Snap to grid"><svg><use href="#snap-grid" /></svg></button>
                    <button aria-label="Snap to pixel"><svg><use href="#snap-box" /></svg></button>
                </div>
                <div class="prop-section prefs">
                    <h2>Preferences</h2>
                    <div class="increment"><label for="increment">Keyboard Increment:</label><input id="increment" value="0.0139 in"></div>
                    <label class="check"><input type="checkbox">Use Preview Bounds</label>
                    <label class="check"><input type="checkbox">Scale Corners</label>
                    <label class="check"><input type="checkbox">Scale Strokes &amp; Effects</label>
                </div>
                <div class="quick">
                    <h2>Quick Actions</h2>
                    <div class="quick-buttons"><button class="outline">Document Setup</button><button class="outline">Preferences</button></div>
                </div>
            </div>
        </aside>
    </main>

    <script src="rulers.js"></script>
</body>

</html>
```
FILE: styles.css
```css
* {
    box-sizing: border-box;
}

body {
    margin: 0;
    height: 100vh;
    display: flex;
    flex-direction: column;
    background: #535353;
    color: #c8c8c8;
    font: 12px/16px "Noto Sans", sans-serif;
    border-bottom: 2px solid #111;
    overflow: hidden;
}

button,
input,
select {
    font: inherit;
    color: inherit;
    background: none;
    border: 0;
    padding: 0;
    margin: 0;
}

select {
    appearance: none;
}

button {
    display: flex;
    align-items: center;
    justify-content: center;
}

svg {
    display: block;
    flex: none;
    overflow: visible;
}

h2 {
    margin: 0;
    font-size: 12px;
    font-weight: normal;
}

.sprite {
    position: absolute;
    width: 0;
    height: 0;
}

.serif-t {
    font: bold 24px "Liberation Serif", serif;
    fill: currentColor;
}

.tiny {
    font: bold 10px "Liberation Sans", sans-serif;
    fill: currentColor;
}

.dim {
    color: #777;
}

/* menu bar */
.menubar {
    display: flex;
    align-items: center;
    height: 38px;
    flex: none;
    padding-left: 13px;
    border-bottom: 1px solid #3e3e3e;
}

.logo {
    width: 20px;
    height: 20px;
}

.logo text {
    font: bold 11px "Noto Sans", sans-serif;
    fill: #ff9a00;
}

.home {
    margin-left: 18px;
}

.home svg {
    width: 23px;
    height: 23px;
}

.menus {
    display: flex;
    gap: 16px;
    height: 26px;
    margin: 0 auto 5px 18px;
    padding: 0 14px 0 18px;
    border: solid #5e5e5e;
    border-width: 0 1px;
    color: #e6e6e6;
    font-size: 15px;
}

.share {
    width: 62px;
    height: 30px;
    border-radius: 15px;
    background: #1473e6;
    color: #fff;
    font-size: 14px;
}

.bar-search {
    width: 52px;
    height: 26px;
    border-right: 1px solid #5e5e5e;
    padding-right: 4px;
}

.bar-search svg {
    width: 22px;
    height: 22px;
}

.workspaces {
    display: flex;
    gap: 21px;
    padding: 2px 15px 0 26px;
}

.window-buttons {
    display: flex;
    align-self: flex-start;
    width: 105px;
    height: 23px;
    margin-right: 4px;
    border: 1px solid #666;
    border-top: 0;
    border-radius: 0 0 3px 3px;
}

.window-buttons button {
    flex: 1;
}

.window-buttons button + button {
    border-left: 1px solid #666;
}

.window-buttons svg {
    width: 16px;
    height: 16px;
}

/* control bar */
.controlbar {
    display: flex;
    align-items: center;
    height: 43px;
    flex: none;
    padding-top: 1px;
    border-bottom: 1px solid #3a3a3a;
}

.control-status {
    width: 110px;
    padding-left: 12px;
    margin-left: 5px;
    margin-right: -5px;
    border-left: 2px dotted #3a3a3a;
    line-height: 26px;
}

.control-group {
    display: flex;
    align-items: center;
    gap: 8px;
    height: 32px;
    padding: 0 8px;
    border-left: 1px solid #4a4a4a;
}

.appearance {
    width: 574px;
}

.recolor {
    width: 47px;
    padding-left: 13px;
}

.characters {
    width: 810px;
    padding-left: 10px;
}

.link {
    color: #f0f0f0;
    text-decoration: none;
    border-bottom: 2px dotted #c0c0c0;
    line-height: 15px;
}

.link.first {
    margin-left: 9px;
}

.para {
    width: 60px;
}

.swatch {
    height: 26px;
    width: 47px;
    justify-content: flex-start;
    border: 1px solid #606060;
    background: #484848;
    color: #f0f0f0;
}

.chip {
    width: 23px;
    height: 24px;
    border: 1px solid #ddd;
    margin-right: 6px;
}

.chip.black {
    background: #000;
}

.chev {
    width: 11px;
    height: 7px;
    color: #f0f0f0;
}

.chev.dim {
    color: #777;
}

.profile {
    margin-left: -2px;
    width: 137px;
    justify-content: flex-start;
}

.profile span {
    width: 113px;
    height: 27px;
    margin-right: 7px;
    background: #808080;
    border: 1px solid #8e8e8e;
}

.profile .chev {
    color: #6b6b6b;
}

.combo {
    display: flex;
    position: relative;
    height: 26px;
    border: 1px solid #606060;
    border-radius: 2px;
    background: #464646;
    color: #f0f0f0;
}

.combo::before {
    content: "";
    position: absolute;
    top: 0;
    bottom: 0;
    right: 21px;
    border-left: 1px solid #585858;
    pointer-events: none;
}

.combo::after {
    content: "";
    position: absolute;
    top: 6px;
    right: 7px;
    width: 7px;
    height: 7px;
    border: solid #f0f0f0;
    border-width: 0 2px 2px 0;
    transform: rotate(45deg);
    pointer-events: none;
}

.combo select {
    flex: 1;
    min-width: 0;
    padding-left: 5px;
}

.spin select {
    padding-left: 2px;
}

.combo.plain::before {
    display: none;
}

.w101 {
    width: 101px;
}

.w201 {
    width: 201px;
}

.w88 {
    width: 88px;
}

.arrows {
    width: 22px;
    display: flex;
    flex-direction: column;
    align-items: center;
    justify-content: space-evenly;
    border-right: 1px solid #585858;
}

.arrows svg {
    width: 9px;
    height: 6px;
}

.lens {
    width: 15px;
    height: 16px;
    margin: 4px 0 0 2px;
    color: #b0b0b0;
}

.lens-chev {
    width: 9px;
    height: 6px;
    margin-top: 10px;
    color: #b0b0b0;
}

.stepper {
    display: flex;
    width: 86px;
    height: 26px;
    border: 1px solid #606060;
    background: #464646;
    color: #f0f0f0;
}

.stepper input {
    width: 62px;
    padding-left: 4px;
    border-right: 1px solid #606060;
}

.stepper button {
    flex: 1;
}

.stepper svg {
    width: 7px;
    height: 11px;
}

.align-set {
    display: flex;
    width: 93px;
    height: 29px;
    border: 1px solid #646464;
}

.align-set button {
    flex: 1;
}

.align-set button + button {
    border-left: 1px solid #646464;
}

.align-set svg {
    width: 20px;
    height: 18px;
}

.align-set .on,
.tools .on::before {
    background: #2e2e2e;
    color: #fff;
}

.pic {
    width: 20px;
    height: 20px;
}

.split {
    gap: 7px;
    width: 38px;
}

.align-set + .split {
    margin-left: 5px;
}

.split:last-child {
    margin-left: 6px;
}

.control-right {
    display: flex;
    align-items: center;
    gap: 14px;
    margin-left: auto;
    padding-right: 18px;
}

.control-right .split {
    margin-right: 8px;
}

/* main area */
main {
    display: flex;
    flex: 1;
    min-height: 0;
    background: #3a3a3a;
}

.collapse {
    display: flex;
    align-items: center;
    height: 15px;
    flex: none;
    padding: 0 8px;
    background: #424242;
}

.collapse.end {
    justify-content: flex-end;
}

.collapse svg {
    width: 8px;
    height: 6px;
}

.grip {
    width: 24px;
    height: 6px;
    background: repeating-linear-gradient(90deg, #3a3a3a 0 1px, transparent 1px 3px);
}

.toolbox {
    display: flex;
    flex-direction: column;
    width: 92px;
    flex: none;
    padding-right: 2px;
}

.toolbox-body {
    flex: 1;
    margin-top: 1px;
    padding-left: 8px;
    border-left: 1px solid #444;
    background: linear-gradient(#3a3a3a, #3a3a3a) 0 690px / 100% 1px no-repeat #535353;
}

.toolbox-body .grip {
    margin: 3px 0 14px 24px;
}

.tools {
    display: grid;
    grid-template-columns: 37px 37px;
    grid-auto-rows: 30px;
}

.tools button {
    position: relative;
    padding-right: 2px;
    padding-top: 1px;
}

.tools svg {
    width: 22px;
    height: 22px;
    position: relative;
}

.tools .on::before {
    content: "";
    position: absolute;
    inset: 2px 3px 1px 0;
    border-radius: 2px;
}

.fly::after {
    content: "";
    position: absolute;
    right: 2px;
    bottom: 3px;
    border: 2px solid;
    border-color: transparent #c8c8c8 #c8c8c8 transparent;
}

.fresh::after {
    content: "";
    position: absolute;
    top: 3px;
    right: 4px;
    width: 9px;
    height: 9px;
    border-radius: 5px;
    background: #2d8ceb;
}

.fill-stroke {
    width: 74px;
    height: 70px;
    margin-top: 8px;
}

.modes {
    display: flex;
    width: 73px;
    height: 25px;
    margin-top: 6px;
    border: 1px solid #5e5e5e;
}

.modes button {
    flex: 1;
}

.modes .on {
    background: #333;
}

.modes svg {
    width: 17px;
    height: 17px;
}

.screen-mode {
    width: 74px;
    margin-top: 9px;
    padding-right: 2px;
}

.screen-mode svg {
    width: 28px;
    height: 22px;
}

.more {
    width: 72px;
    margin-top: 25px;
}

.more svg {
    width: 20px;
    height: 6px;
}

/* document window */
.document {
    position: relative;
    display: flex;
    flex-direction: column;
    flex: 1;
    min-width: 0;
}

.tabs {
    display: flex;
    height: 36px;
    flex: none;
    background: #424242;
}

.doc-tab {
    display: flex;
    align-items: center;
    width: 448px;
    padding-left: 12px;
    background: #535353;
    border-right: 1px solid #3a3a3a;
    color: #f0f0f0;
    font-size: 13px;
    font-weight: bold;
    white-space: nowrap;
}

.doc-tab button {
    margin-left: auto;
    margin-right: 8px;
}

.doc-tab button svg {
    width: 9px;
    height: 9px;
}

.cloud {
    width: 27px;
    height: 19px;
    margin-right: 7px;
    color: #c0c0c0;
}

.workarea {
    display: grid;
    grid-template: 16px 1fr / 16px 1fr 22px;
    flex: 1;
    min-height: 0;
}

.corner,
.ruler-h,
.ruler-v {
    width: 100%;
    height: 100%;
    background: #333;
    overflow: hidden;
}

.ruler-v {
    grid-area: 2 / 1;
}

.ruler-text {
    font: 10px "Noto Sans", sans-serif;
    fill: #b0b0b0;
}

.canvas {
    grid-area: 2 / 2;
    background: #fff;
    overflow: hidden;
}

.artwork {
    width: 100%;
    height: 100%;
}

.selection {
    fill: #fff;
    stroke: #cc5c5c;
}

.scroll-v {
    grid-area: 1 / 3 / 3 / 4;
    display: flex;
    flex-direction: column;
    align-items: center;
    justify-content: space-between;
    padding: 7px 2px 7px 0;
    background: #4b4b4b;
    color: #999;
}

.scroll-v svg {
    width: 10px;
    height: 7px;
}

.statusbar {
    display: flex;
    align-items: flex-end;
    height: 20px;
    flex: none;
    padding-left: 4px;
    background: #535353;
}

.statusbar .combo {
    height: 19px;
}

.statusbar .combo::after {
    top: 4px;
}

.statusbar select {
    padding-top: 2px;
}

.zoom {
    width: 86px;
    margin-right: 5px;
}

.page {
    width: 73px;
}

.pager {
    display: flex;
    gap: 10px;
    height: 16px;
    padding: 0 12px 0 6px;
}

.page + .pager {
    gap: 12px;
    padding: 0 10px;
}

.status-text {
    width: 248px;
    text-align: center;
}

.status-more {
    width: 24px;
    height: 16px;
}

.scroll-h {
    display: flex;
    align-items: center;
    justify-content: space-between;
    flex: 1;
    height: 20px;
    padding: 0 7px;
    background: #4b4b4b;
    color: #999;
}

.scroll-h svg {
    width: 7px;
    height: 11px;
}

.thumb {
    width: 32px;
    height: 17px;
    border-radius: 8px;
    background: #5f5f5f;
}

.scroll-corner {
    width: 22px;
    height: 20px;
    background: #535353;
}

/* panels */
.panel-tabs {
    display: flex;
    height: 34px;
    flex: none;
    background: #424242;
    border-bottom: 1px solid #3a3a3a;
    color: #a0a0a0;
    font-weight: 500;
}

.panel-tabs button {
    padding: 0 6px 0 12px;
    border-right: 1px solid #3d3d3d;
}

.panel-tabs .on {
    margin-bottom: -1px;
    padding: 0 12px;
    background: #535353;
    color: #fff;
    font-weight: 600;
}

.panel-tools {
    display: flex;
    align-items: center;
    gap: 8px;
    margin-left: auto;
    padding-right: 7px;
}

.panel-tools i {
    width: 1px;
    height: 14px;
    background: #aaa;
}

.layers-panel {
    position: absolute;
    right: 0;
    top: 462px;
    width: 303px;
    height: 450px;
    display: flex;
    flex-direction: column;
    background: #535353;
    border: 1px solid #333;
    border-top: 5px solid #333;
    box-shadow: 0 0 5px rgba(0, 0, 0, 0.2);
}

.layers-box {
    flex: 1;
    margin: 8px 7px 0;
    border: 1px solid #5e5e5e;
}

.layers-search {
    display: flex;
    align-items: center;
    justify-content: space-between;
    height: 43px;
    padding: 0 6px 5px;
}

.search-field {
    display: flex;
    align-items: center;
    width: 243px;
    height: 29px;
    padding-left: 8px;
    border: 1px solid #606060;
    border-radius: 2px;
    background: #444;
}

.search-field svg {
    width: 16px;
    height: 16px;
    margin-right: 11px;
}

.search-field input {
    width: 200px;
    font-size: 14px;
}

.search-field input::placeholder {
    color: #6c6c6c;
}

.layer-list {
    margin: 0;
    padding: 0;
    list-style: none;
    border-top: 1px solid #606060;
}

.layer-list li {
    position: relative;
    display: flex;
    align-items: center;
    height: 27px;
    border-bottom: 1px solid #5e5e5e;
    color: #e0e0e0;
}

.layer-list .current {
    background: #4f657b;
}

.current::after {
    content: "";
    position: absolute;
    top: 0;
    right: 0;
    border: 4px solid;
    border-color: #ddd #ddd transparent transparent;
}

.eye,
.lock {
    width: 26px;
    height: 26px;
    border-right: 1px solid #5e5e5e;
}

.lock {
    border: 0;
}

.mark {
    width: 4px;
    height: 23px;
    margin-right: 11px;
}

.green {
    background: #4fff4f;
}

.red {
    background: #ff4f4f;
}

.blue {
    background: #4f80ff;
}

.open {
    width: 6px;
    height: 10px;
    margin-right: 18px;
    color: #f0f0f0;
}

.thumbnail {
    width: 22px;
    height: 22px;
    margin-right: 6px;
    border: 1px solid #000;
    background: #fff;
    overflow: hidden;
}

.name {
    flex: 1;
}

.target {
    width: 45px;
    height: 26px;
    border-left: 1px solid #5e5e5e;
    background: radial-gradient(circle at 13px 14px, transparent 4px, #c8c8c8 4px 5px, transparent 6px);
}

.layers-footer {
    display: flex;
    align-items: center;
    height: 25px;
    padding-left: 6px;
    font-size: 13px;
}

.layers-footer span {
    width: 44px;
}

.layers-footer button {
    width: 32px;
}

.layers-footer svg {
    width: 17px;
    height: 17px;
}

.layers-footer .wide {
    width: 21px;
}

.resize {
    display: flex;
    justify-content: center;
    height: 10px;
    padding-top: 1px;
    border-top: 1px solid #333;
}

.dock {
    display: flex;
    flex-direction: column;
    width: 50px;
    flex: none;
    padding: 0 1px;
    background: linear-gradient(#535353, #535353) 1px 100px / 47px 100% no-repeat #3a3a3a;
}

.dock-group {
    padding: 4px 0 3px;
    width: 47px;
    background: #535353;
    border-top: 1px solid #3a3a3a;
}

.text-group {
    padding-top: 3px;
}

.dock-group:last-child {
    border-bottom: 1px solid #3a3a3a;
}

.dock-group .grip {
    margin: 0 auto 5px 12px;
}

.dock-group button {
    width: 34px;
    height: 29px;
    margin: 3px 7px;
    border-radius: 2px;
}

.dock-group button + button {
    margin-top: 6px;
}

.dock-group svg {
    width: 22px;
    height: 22px;
}

.dock-group .on {
    background: #383838;
}

.glyph {
    font: 24px/24px "Noto Sans", sans-serif;
}

.caret {
    padding-right: 2px;
    border-right: 1px solid #c8c8c8;
}

.italic {
    font: italic 27px/27px "Liberation Serif", serif;
}

/* properties */
.properties {
    display: flex;
    flex-direction: column;
    width: 315px;
    flex: none;
    padding: 0 1px;
}

.properties .panel-tabs {
    margin-top: 1px;
    height: 33px;
}

.prop-body {
    flex: 1;
    padding-right: 14px;
    background: #535353;
}

.prop-section {
    padding-left: 12px;
    border-bottom: 1px solid #494949;
}

.one-line {
    display: flex;
    align-items: center;
    height: 48px;
    padding-top: 5px;
}

.one-line:first-child {
    height: 41px;
}

.expander {
    padding-left: 7px;
}

.expander svg {
    width: 9px;
    height: 13px;
    margin-right: 15px;
}

.document-section {
    height: 164px;
    padding-top: 19px;
}

.field-row {
    display: flex;
    align-items: center;
    height: 26px;
    margin-top: 10px;
}

.document-section h2 {
    margin-bottom: 14px;
}

.field-row label {
    width: 87px;
    margin-right: 7px;
    text-align: right;
}

.units {
    width: 147px;
}

.board {
    width: 94px;
    margin-right: 13px;
}

.step {
    width: 16px;
    margin-right: 9px;
}

.outline {
    height: 27px;
    border: 1px solid #777;
    border-radius: 2px;
    color: #f0f0f0;
}

.edit {
    width: 144px;
    margin: 10px 0 0 94px;
}

.toggles {
    display: flex;
    align-items: center;
    height: 49px;
    gap: 11px;
    padding-top: 3px;
}

.toggles span {
    width: 97px;
}

.toggles button {
    width: 27px;
    height: 27px;
    border-radius: 2px;
}

.toggles svg {
    width: 21px;
    height: 21px;
}

.toggles .on {
    background: #2b2b2b;
    color: #fff;
}

.prefs {
    height: 178px;
    padding-top: 14px;
}

.increment {
    display: flex;
    align-items: center;
    margin: 11px 0 8px -1px;
}

.increment label {
    width: 123px;
}

.increment input {
    width: 74px;
    height: 26px;
    padding-left: 6px;
    border: 1px solid #606060;
    border-radius: 2px;
    background: #444;
    color: #f0f0f0;
}

.check {
    display: flex;
    align-items: center;
    height: 30px;
    padding-left: 4px;
}

.check input {
    appearance: none;
    width: 15px;
    height: 15px;
    margin-right: 4px;
    border: 1px solid #c8c8c8;
    border-radius: 2px;
}

.quick {
    padding: 21px 0 0 12px;
}

.quick-buttons {
    display: flex;
    gap: 13px;
    margin-top: 14px;
}

.quick-buttons .outline {
    width: 126px;
}

.quick-buttons .outline:first-child {
    width: 145px;
}
```
FILE: rulers.js
```js
// half an inch on screen at 150 %
const STEP = 105.75;
const NS = 'http://www.w3.org/2000/svg';

function add(svg, tag, attrs, text) {
    const el = document.createElementNS(NS, tag);
    for (const key in attrs) el.setAttribute(key, attrs[key]);
    if (text) el.textContent = text;
    svg.appendChild(el);
}

function tickLength(i) {
    if (i % 8 === 0) return 16;
    if (i % 4 === 0) return 7;
    return i % 2 === 0 ? 5 : 4;
}

function drawRuler(id, start, zero, horizontal) {
    const svg = document.getElementById(id);
    const length = horizontal ? svg.clientWidth : svg.clientHeight;
    let d = '';
    for (let i = -8; start + i * STEP / 8 < length; i++) {
        const pos = Math.round(start + i * STEP / 8) + 0.5;
        if (pos < 0) continue;
        const tick = 16 - tickLength(i);
        d += horizontal ? `M${pos} ${tick}V16` : `M${tick} ${pos}H16`;
        if (i % 8 !== 0) continue;

        const value = Math.abs(i / 8 - zero) / 2;
        const whole = Number.isInteger(value);
        if (horizontal) {
            add(svg, 'text', { x: pos + 3, y: 11, class: 'ruler-text' }, whole ? String(value) : '1/2');
        } else if (whole) {
            add(svg, 'text', { x: 1, y: pos - 3, class: 'ruler-text' }, String(value));
        } else {
            add(svg, 'text', { x: 2, y: pos - 15, class: 'ruler-text' }, '1');
            add(svg, 'path', { d: `M2 ${pos - 13}h5`, stroke: '#b0b0b0' });
            add(svg, 'text', { x: 2, y: pos - 3, class: 'ruler-text' }, '2');
        }
    }
    add(svg, 'path', { d, stroke: '#6a6a6a', fill: 'none' });
}

drawRuler('ruler-h', 6, 3, true);
drawRuler('ruler-v', 51, -3, false);

// pointer position
add(document.getElementById('ruler-h'), 'path', { d: 'M857.5 0V16', stroke: '#888', 'stroke-dasharray': '1 2' });
add(document.getElementById('ruler-v'), 'path', { d: 'M0 564.5H16', stroke: '#888', 'stroke-dasharray': '1 2' });
```
